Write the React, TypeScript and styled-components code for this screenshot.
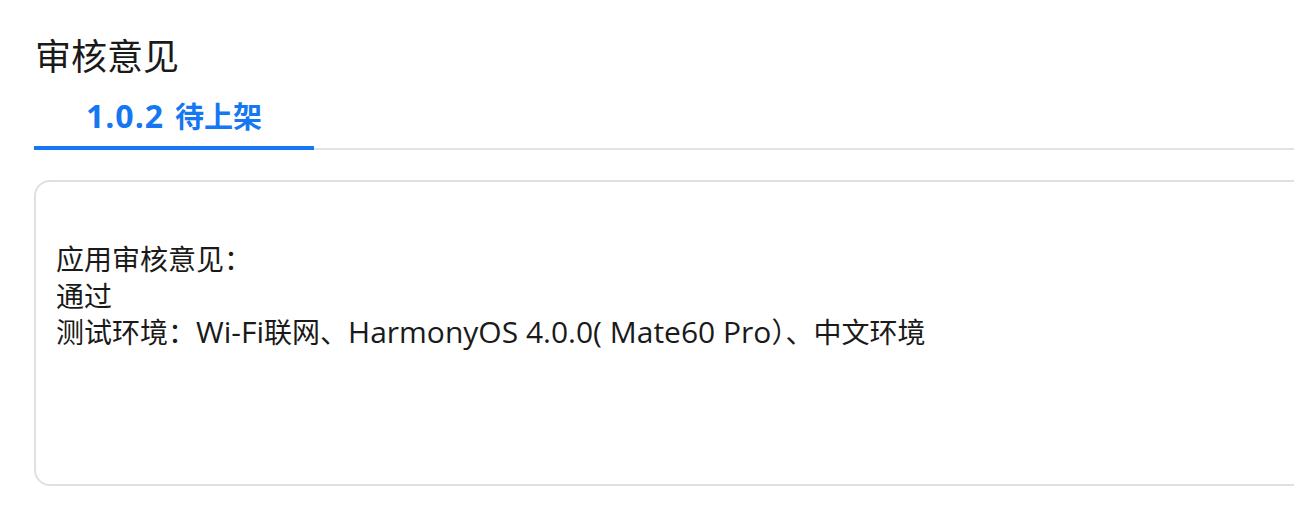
import React from "react";
import styled, { createGlobalStyle } from "styled-components";

const Global = createGlobalStyle`
  html, body { margin: 0; padding: 0; background: #ffffff; }
  body { font-family: "Open Sans", "Noto Sans CJK SC", sans-serif; color: #1f1f1f; overflow: hidden; }
`;

const Page = styled.div`
  width: 1294px;
  height: 518px;
  padding: 34px 0 0 34px;
  box-sizing: border-box;
  overflow: hidden;
`;

const Title = styled.h1`
  margin: 0 0 0 1px;
  font-size: 36px;
  font-weight: 400;
  line-height: 46px;
  color: #1a1a1a;
`;

const Tabs = styled.div`
  display: flex;
  border-bottom: 2px solid #e3e3e3;
  margin-right: -40px;
`;

const Tab = styled.div<{ $active?: boolean }>`
  width: 280px;
  box-sizing: border-box;
  text-align: center;
  padding: 16px 0 9px;
  font-size: 29px;
  font-weight: 700;
  line-height: 40px;
  color: ${(p) => (p.$active ? "#1677f2" : "#666")};
  border-bottom: 4px solid ${(p) => (p.$active ? "#1677f2" : "transparent")};
  margin-bottom: -2px;
`;

const Version = styled.span`
  font-size: 32px;
  letter-spacing: 1px;
  margin-right: 11px;
`;

const Card = styled.div`
  margin-top: 30px;
  margin-right: -40px;
  height: 306px;
  box-sizing: border-box;
  border: 2px solid #e0e0e0;
  border-radius: 16px;
  padding: 59px 20px 0 20px;
`;

const Line = styled.div`
  font-size: 28px;
  line-height: 36.5px;
  color: #1a1a1a;
  white-space: pre;
`;

const Latin = styled.span`
  font-size: 30px;
`;

export default function App() {
  return (
    <>
      <Global />
      <Page>
        <Title>审核意见</Title>
        <Tabs>
          <Tab $active>
            <Version>1.0.2</Version>待上架
          </Tab>
        </Tabs>
        <Card>
          <Line>应用审核意见：</Line>
          <Line>通过</Line>
          <Line>
            测试环境：<Latin>Wi-Fi</Latin>联网、<Latin>HarmonyOS 4.0.0( Mate60 Pro</Latin>）、中文环境
          </Line>
        </Card>
      </Page>
    </>
  );
}
